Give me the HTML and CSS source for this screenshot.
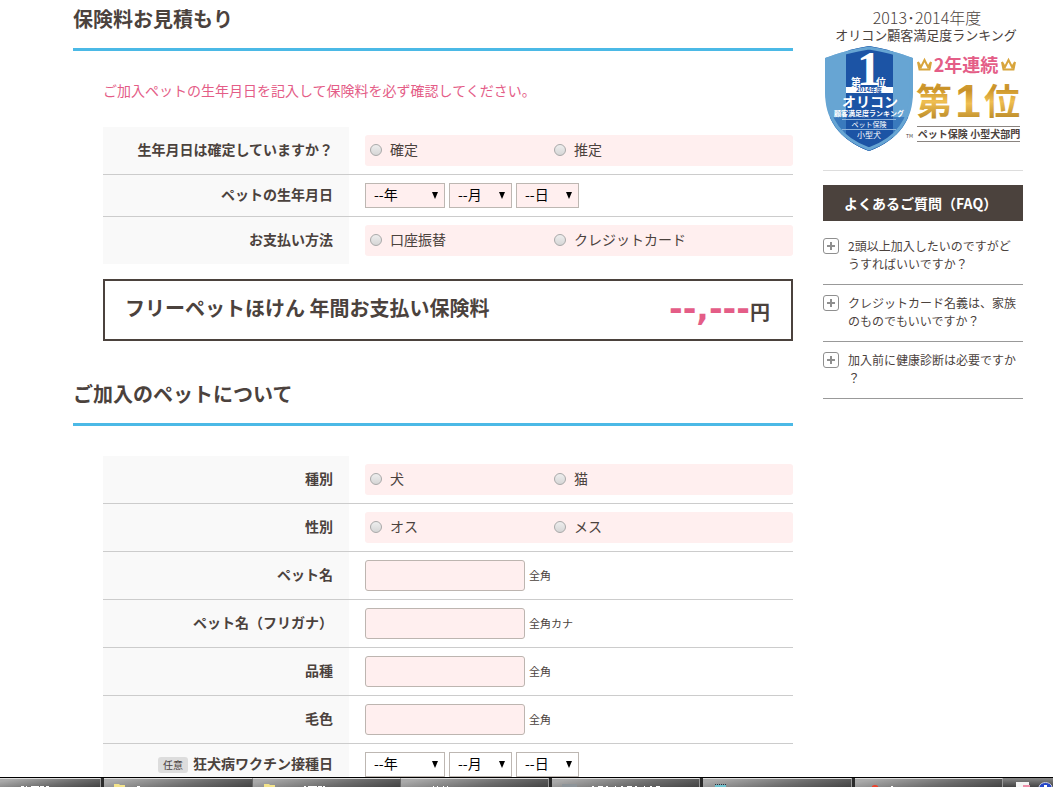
FILE: index.html
```
<!DOCTYPE html>
<html lang="ja">

<head>
    <meta charset="UTF-8">
    <meta name="viewport" content="width=device-width, initial-scale=1.0">
    <title>保険料お見積もり</title>
    <link rel="stylesheet" href="styles.css">
</head>

<body>

    <div class="wrap">
        <!-- 申込フォーム -->
        <form class="main">
            <h2>保険料お見積もり</h2>

            <div class="inner">
                <p class="notice">ご加入ペットの生年月日を記入して保険料を必ず確認してください。</p>

                <table class="form-table">
                    <tr>
                        <th scope="row" id="kakutei">生年月日は確定していますか？</th>
                        <td>
                            <div class="radio-box" role="radiogroup" aria-labelledby="kakutei">
                                <label><input type="radio" name="kakutei">確定</label>
                                <label><input type="radio" name="kakutei">推定</label>
                            </div>
                        </td>
                    </tr>
                    <tr>
                        <th scope="row"><label for="birth-y">ペットの生年月日</label></th>
                        <td>
                            <div class="date-box need">
                                <select id="birth-y" class="year"><option>--年</option></select>
                                <select aria-label="月"><option>--月</option></select>
                                <select aria-label="日"><option>--日</option></select>
                            </div>
                        </td>
                    </tr>
                    <tr>
                        <th scope="row" id="pay">お支払い方法</th>
                        <td>
                            <div class="radio-box" role="radiogroup" aria-labelledby="pay">
                                <label><input type="radio" name="pay">口座振替</label>
                                <label><input type="radio" name="pay">クレジットカード</label>
                            </div>
                        </td>
                    </tr>
                </table>

                <div class="price-box">
                    <p class="price-title">フリーペットほけん 年間お支払い保険料</p>
                    <p class="price"><span class="num">--,---</span>円</p>
                </div>
            </div>

            <h2>ご加入のペットについて</h2>

            <div class="inner">
                <table class="form-table">
                    <tr>
                        <th scope="row" id="kind">種別</th>
                        <td>
                            <div class="radio-box" role="radiogroup" aria-labelledby="kind">
                                <label><input type="radio" name="kind">犬</label>
                                <label><input type="radio" name="kind">猫</label>
                            </div>
                        </td>
                    </tr>
                    <tr>
                        <th scope="row" id="sex">性別</th>
                        <td>
                            <div class="radio-box" role="radiogroup" aria-labelledby="sex">
                                <label><input type="radio" name="sex">オス</label>
                                <label><input type="radio" name="sex">メス</label>
                            </div>
                        </td>
                    </tr>
                    <tr>
                        <th scope="row"><label for="pet-name">ペット名</label></th>
                        <td><div class="text-box"><input type="text" id="pet-name"><span>全角</span></div></td>
                    </tr>
                    <tr>
                        <th scope="row"><label for="pet-kana">ペット名（フリガナ）</label></th>
                        <td><div class="text-box"><input type="text" id="pet-kana"><span>全角カナ</span></div></td>
                    </tr>
                    <tr>
                        <th scope="row"><label for="breed">品種</label></th>
                        <td><div class="text-box"><input type="text" id="breed"><span>全角</span></div></td>
                    </tr>
                    <tr>
                        <th scope="row"><label for="color">毛色</label></th>
                        <td><div class="text-box"><input type="text" id="color"><span>全角</span></div></td>
                    </tr>
                    <tr>
                        <th scope="row"><span class="any">任意</span><label for="vac-y">狂犬病ワクチン接種日</label></th>
                        <td>
                            <div class="date-box">
                                <select id="vac-y" class="year"><option>--年</option></select>
                                <select aria-label="月"><option>--月</option></select>
                                <select aria-label="日"><option>--日</option></select>
                            </div>
                        </td>
                    </tr>
                </table>
            </div>
        </form>

        <!-- サイドバー -->
        <aside class="side">
            <div class="award">
                <svg viewBox="0 0 200 155">
                    <defs>
                        <linearGradient id="gold" x1="0" y1="0" x2="0" y2="1">
                            <stop offset="0" stop-color="#e0ae45" />
                            <stop offset="0.3" stop-color="#c99228" />
                            <stop offset="0.55" stop-color="#f0bf52" />
                            <stop offset="1" stop-color="#a9791a" />
                        </linearGradient>
                        <clipPath id="shield">
                            <path d="M46 46C59 48 76 53 90 58V92C90 119 77 139 46 151C15 139 2 119 2 92V58C16 53 33 48 46 46Z" />
                        </clipPath>
                        <path id="crown" d="M1 3L4 8L7.500 1L11 8L14 3L12.500 10.500H2.500Z" />
                    </defs>

                    <text class="award-year" x="104" y="24">2013･2014年度</text>
                    <text class="award-name" x="103" y="40">オリコン顧客満足度ランキング</text>

                    <!-- 盾 -->
                    <g clip-path="url(#shield)">
                        <path fill="#67a5d3" d="M0 40H92V155H0Z" />
                        <path fill="#3a7abd" d="M0 117H92V155H0Z" />
                        <path fill="#1c54a5" d="M23 40H70V155H23Z" />
                    </g>
                    <path fill="none" stroke="#67a5d3" stroke-width="3" d="M46 48C59 50 75 54 88 59V92C88 118 76 138 46 149C16 138 4 118 4 92V59C17 54 33 50 46 48Z" />
                    <g class="shield-text">
                        <text class="one" x="46" y="85">1</text>
                        <text class="rank" x="33" y="86">第</text>
                        <text class="rank" x="58" y="86">位</text>
                        <rect x="23" y="87" width="47" height="6" fill="#fff" />
                        <text class="year2" x="46" y="92">2014年度</text>
                        <text class="oricon" x="47" y="107">オリコン</text>
                        <text class="manzoku" x="46" y="116">顧客満足度ランキング</text>
                        <path stroke="#8fb4dc" d="M19 119.500H73M19 129.500H73" />
                        <text class="cat" x="46" y="127">ペット保険</text>
                        <text class="cat dog" x="46" y="138">小型犬</text>
                    </g>
                    <text class="tm" x="83" y="138">TM</text>

                    <!-- 2年連続第1位 -->
                    <use class="crown" href="#crown" x="94" y="59" />
                    <use class="crown" href="#crown" x="178" y="59" />
                    <text class="renzoku" x="143" y="72">2年連続</text>
                    <g class="first">
                        <text x="111" y="115">第</text>
                        <text class="num1" x="145" y="117">1</text>
                        <text x="179" y="115">位</text>
                    </g>
                    <path stroke="#8a8480" d="M94 126.500H197M94 141.500H197" />
                    <text class="bumon" x="146" y="138">ペット保険 小型犬部門</text>
                </svg>
            </div>

            <h3>よくあるご質問（FAQ）</h3>
            <ul class="faq">
                <li>
                    <svg class="plus" viewBox="0 0 16 16"><rect x="0.500" y="0.500" width="15" height="15" rx="2.500" /><path d="M4 8H12M8 4V12" /></svg>
                    <a href="#">2頭以上加入したいのですがど<br>うすればいいですか？</a>
                </li>
                <li>
                    <svg class="plus" viewBox="0 0 16 16"><rect x="0.500" y="0.500" width="15" height="15" rx="2.500" /><path d="M4 8H12M8 4V12" /></svg>
                    <a href="#">クレジットカード名義は、家族<br>のものでもいいですか？</a>
                </li>
                <li>
                    <svg class="plus" viewBox="0 0 16 16"><rect x="0.500" y="0.500" width="15" height="15" rx="2.500" /><path d="M4 8H12M8 4V12" /></svg>
                    <a href="#">加入前に健康診断は必要ですか<br>？</a>
                </li>
            </ul>
        </aside>
    </div>

    <!-- タスクバー -->
    <div class="taskbar">
        <div class="task first-task"><svg viewBox="0 0 101 9"><path stroke="#fff" stroke-dasharray="3 2 1 4 8 1 4 2" d="M21 8.500H50" /></svg></div>
        <div class="task group"><svg viewBox="0 0 148 9"><path fill="#f3e38a" d="M10 6H15L16 7H21V9H10Z" /><path stroke="#fff" d="M33 8.500H36" /></svg></div>
        <div class="task group next"><svg viewBox="0 0 148 9"><path fill="#f3e38a" d="M11 6H16L17 7H22V9H11Z" /><path stroke="#fff" stroke-dasharray="2 2 9 1 4 1" d="M51 8.500H73" /></svg></div>
        <div class="task next"><svg viewBox="0 0 148 9"><path stroke="#fff" stroke-dasharray="1 3 1 5" d="M32 8.500H49" /></svg></div>
        <div class="task"><svg viewBox="0 0 148 9"><path fill="#8d9499" d="M10 6H25V9H10Z" /><path stroke="#fff" stroke-dasharray="2 4 5 3 2 7 1 5" d="M40 8.500H108" /></svg></div>
        <div class="task"><svg viewBox="0 0 148 9"><path fill="#6fc3cf" d="M12 7H23V9H12Z" /><path stroke="#234" stroke-dasharray="1 1" d="M12 6.500H23" /></svg></div>
        <div class="task"><svg viewBox="0 0 148 9"><path fill="#e8432e" d="M17 8L19 7H21L23 8V9H17Z" /><path stroke="#fff" d="M36 8.500H38" /></svg></div>
        <div class="tray"><svg viewBox="0 0 50 9"><path fill="#f4f4f4" d="M13 4H26V9H13Z" /><path fill="#ec8fa8" d="M20 7H27V9H20Z" /><path fill="#2748c8" stroke="#ccd" d="M36 9C37 3 48 3 49 9" /><path fill="#fff" d="M41 7H44V9H41Z" /></svg></div>
    </div>

</body>
</html>
```

FILE: styles.css
```
* {
    box-sizing: border-box;
}

html,
body {
    height: 100%;
}

body {
    display: flex;
    flex-direction: column;
    margin: 0;
    overflow: hidden;
    background: #fff;
    color: #4b423d;
    font-family: "Noto Sans CJK JP", sans-serif;
    font-size: 14px;
}

h2,
h3,
p,
ul {
    margin: 0;
    padding: 0;
}

.wrap {
    display: flex;
    flex: 1;
    gap: 30px;
    min-height: 0;
    padding: 0 30px 0 73px;
    overflow: hidden;
}

.main {
    flex: 1;
}

h2 {
    padding: 4px 0 14px;
    border-bottom: 3px solid #4bb9e6;
    font-size: 20px;
    line-height: 30px;
}

.inner {
    padding: 30px 0 34px 30px;
}

.notice {
    margin-bottom: 28px;
    color: #e45d87;
    line-height: 18px;
}

/* 入力テーブル */
.form-table {
    width: 100%;
    border-spacing: 0;
}

.form-table th,
.form-table td {
    padding: 8px 0 8px 16px;
    border-bottom: 1px solid #ccc;
}

.form-table tr:last-child th,
.form-table tr:last-child td {
    border-bottom: none;
}

.form-table th {
    width: 246px;
    padding: 0 16px 4px 0;
    background: #f9f9f9;
    line-height: 20px;
    text-align: right;
}

.radio-box {
    display: flex;
    align-items: center;
    height: 31px;
    padding: 0 0 4px 5px;
    border-radius: 3px;
    background: #ffefef;
}

.radio-box label {
    display: flex;
    align-items: center;
    gap: 8px;
    width: 43.5%;
}

input[type="radio"] {
    width: 12px;
    height: 12px;
    margin: 2px 0 0;
    border: 1px solid #a9a9a9;
    border-radius: 50%;
    background: linear-gradient(#eee, #d6d6d6);
    appearance: none;
}

.date-box {
    display: flex;
    gap: 4px;
}

select {
    width: 63px;
    height: 25px;
    padding: 0 0 4px 8px;
    border: 1px solid #bdb7b2;
    border-radius: 0;
    background: #fff url("data:image/svg+xml,%3Csvg xmlns='http://www.w3.org/2000/svg' width='6' height='7'%3E%3Cpath d='M0 0h6L3 7z'/%3E%3C/svg%3E") no-repeat right 6px center;
    color: #000;
    font-family: inherit;
    font-size: 14px;
    appearance: none;
}

select.year {
    width: 80px;
}

.need select {
    background-color: #ffefef;
}

.text-box {
    display: flex;
    align-items: center;
    gap: 4px;
    font-size: 11px;
}

.text-box span {
    padding-bottom: 2px;
}

input[type="text"] {
    width: 160px;
    height: 31px;
    padding: 0 8px;
    border: 1px solid #bdb5b0;
    border-radius: 3px;
    background: #ffefef;
}

.any {
    display: inline-block;
    margin-right: 5px;
    padding: 0 5px;
    border-radius: 3px;
    background: #ddd;
    font-size: 10px;
    font-weight: normal;
    line-height: 16px;
}

/* 保険料 */
.price-box {
    display: flex;
    align-items: center;
    justify-content: space-between;
    height: 62px;
    margin-top: 15px;
    padding: 0 21px 0 20px;
    border: 2px solid #4b423d;
    font-size: 20px;
    font-weight: bold;
}

.price-title {
    padding-bottom: 6px;
}

.price {
    line-height: 40px;
}

.price .num {
    color: #e45d87;
    font-family: "DejaVu Sans", sans-serif;
    font-size: 33px;
}

/* サイドバー */
.side {
    width: 200px;
}

.award {
    margin-bottom: 14px;
    padding-bottom: 15px;
    border-bottom: 1px solid #ddd;
}

.award svg {
    display: block;
    width: 100%;
}

.award text {
    fill: #4b423d;
    text-anchor: middle;
}

.award .award-year {
    font-size: 16px;
    font-weight: 300;
}

.award .award-name {
    font-size: 13px;
}

.award .shield-text text {
    fill: #fff;
    font-weight: bold;
}

.award .shield-text .one {
    font-family: "Liberation Serif", serif;
    font-size: 48px;
}

.award .rank {
    font-size: 10px;
}

.award .shield-text .year2 {
    fill: #1c54a5;
    font-size: 6px;
}

.award .oricon {
    font-size: 14px;
}

.award .manzoku {
    font-size: 7px;
}

.award .shield-text .cat {
    font-size: 7px;
    font-weight: normal;
}

.award .shield-text .dog {
    font-size: 8px;
}

.award .tm {
    font-size: 5px;
    text-anchor: start;
}

.award .crown {
    fill: none;
    stroke: #d8a53c;
    stroke-width: 2;
}

.award .renzoku {
    fill: #e45d87;
    font-size: 18px;
    font-weight: bold;
}

.award .first text {
    fill: url(#gold);
    font-size: 36px;
    font-weight: bold;
}

.award .first .num1 {
    font-family: "Liberation Sans", sans-serif;
    font-size: 46px;
}

.award .bumon {
    font-size: 10px;
    font-weight: bold;
}

h3 {
    margin-bottom: 7px;
    padding-left: 21px;
    background: #4b423d;
    color: #fff;
    font-size: 14px;
    line-height: 36px;
}

.faq {
    list-style: none;
}

.faq li {
    display: flex;
    gap: 9px;
    padding: 9px 0 11px;
    border-bottom: 1px solid #999;
    font-size: 12px;
    line-height: 18px;
}

.faq a {
    color: #4b423d;
    text-decoration: none;
}

.plus {
    flex: none;
    width: 16px;
    height: 16px;
    margin-top: 1px;
    fill: none;
    stroke: #8f8f8f;
}

.plus path {
    stroke-width: 2;
}

/* タスクバー */
.taskbar {
    display: flex;
    gap: 3px;
    height: 10px;
    border-top: 1px solid #000;
    background: #2b2b2b;
}

.task {
    flex: 148;
    min-width: 0;
    overflow: hidden;
    border-top: 1px solid #ddd;
    border-right: 1px solid #999;
    background: linear-gradient(170deg, #aaa 10%, #6c6c6c 60%, #444);
}

.first-task {
    flex: 101;
}

.task.group {
    margin-right: -3px;
    border-right: none;
}

.task.next {
    border-left: 1px solid #666;
}

.tray {
    flex: none;
    width: 50px;
    margin-left: -3px;
    background: linear-gradient(#888, #444);
}

.taskbar svg {
    display: block;
    height: 9px;
    margin-top: -1px;
}

.tray svg {
    margin-top: 0;
}
```
